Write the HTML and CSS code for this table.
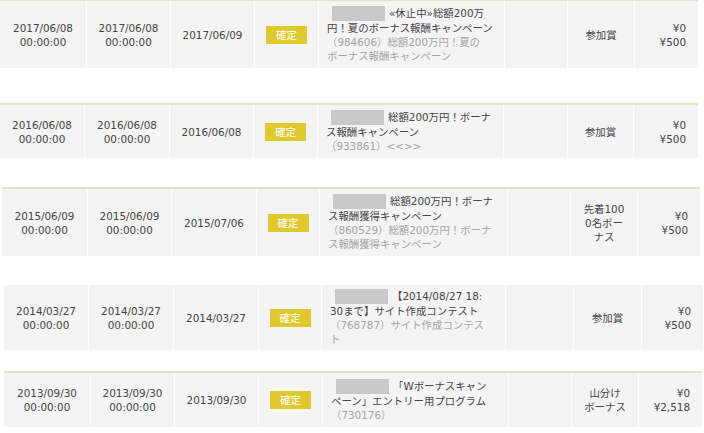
FILE: index.html
```html
<!DOCTYPE html>
<html lang="ja">
<head>
<meta charset="utf-8">
<link rel="stylesheet" href="styles.css">
</head>
<body>
<div class="list">
  <div class="row r1">
    <div class="cell">2017/06/08<br>00:00:00</div>
    <div class="cell">2017/06/08<br>00:00:00</div>
    <div class="cell">2017/06/09</div>
    <div class="cell"><span class="badge">確定</span></div>
    <div class="cell name"><div><span class="mask"></span>«休止中»総額200万<br>円！夏のボーナス報酬キャンペーン<br><span class="sub">（984606）総額200万円！夏の<br>ボーナス報酬キャンペーン</span></div></div>
    <div class="cell"></div>
    <div class="cell">参加賞</div>
    <div class="cell amount">¥0<br>¥500</div>
  </div>

  <div class="row r2">
    <div class="cell">2016/06/08<br>00:00:00</div>
    <div class="cell">2016/06/08<br>00:00:00</div>
    <div class="cell">2016/06/08</div>
    <div class="cell"><span class="badge">確定</span></div>
    <div class="cell name"><div><span class="mask"></span>総額200万円！ボーナ<br>ス報酬キャンペーン<br><span class="sub">（933861）&lt;&lt;&gt;&gt;</span></div></div>
    <div class="cell"></div>
    <div class="cell">参加賞</div>
    <div class="cell amount">¥0<br>¥500</div>
  </div>

  <div class="row r3">
    <div class="cell">2015/06/09<br>00:00:00</div>
    <div class="cell">2015/06/09<br>00:00:00</div>
    <div class="cell">2015/07/06</div>
    <div class="cell"><span class="badge">確定</span></div>
    <div class="cell name"><div><span class="mask"></span>総額200万円！ボーナ<br>ス報酬獲得キャンペーン<br><span class="sub">（860529）総額200万円！ボーナ<br>ス報酬獲得キャンペーン</span></div></div>
    <div class="cell"></div>
    <div class="cell">先着100<br>0名ボー<br>ナス</div>
    <div class="cell amount">¥0<br>¥500</div>
  </div>

  <div class="row r4">
    <div class="cell">2014/03/27<br>00:00:00</div>
    <div class="cell">2014/03/27<br>00:00:00</div>
    <div class="cell">2014/03/27</div>
    <div class="cell"><span class="badge">確定</span></div>
    <div class="cell name"><div><span class="mask"></span>【2014/08/27 18:<br>30まで】サイト作成コンテスト<br><span class="sub">（768787）サイト作成コンテス<br>ト</span></div></div>
    <div class="cell"></div>
    <div class="cell">参加賞</div>
    <div class="cell amount">¥0<br>¥500</div>
  </div>

  <div class="row r5">
    <div class="cell">2013/09/30<br>00:00:00</div>
    <div class="cell">2013/09/30<br>00:00:00</div>
    <div class="cell">2013/09/30</div>
    <div class="cell"><span class="badge">確定</span></div>
    <div class="cell name"><div><span class="mask"></span>「Wボーナスキャン<br>ペーン」エントリー用プログラム<br><span class="sub">（730176）</span></div></div>
    <div class="cell"></div>
    <div class="cell">山分け<br>ボーナス</div>
    <div class="cell amount">¥0<br>¥2,518</div>
  </div>
</div>
</body>
</html>
```

FILE: styles.css
```css
html, body {
  margin: 0;
  padding: 0;
  background: #ffffff;
}

body {
  font-family: "DejaVu Sans", "Noto Sans CJK JP", sans-serif;
  font-size: 10.4px;
  line-height: 14px;
  color: #444444;
  width: 704px;
  height: 433px;
  overflow: hidden;
}

.list {
  display: flex;
  flex-direction: column;
  align-items: flex-start;
}

.row {
  display: grid;
  column-gap: 1px;
  background: #ffffff;
  border-top: 2px solid #e6e3c4;
}

.cell {
  background: #f4f4f4;
  display: flex;
  align-items: center;
  justify-content: center;
  text-align: center;
  white-space: nowrap;
}

.cell.name {
  justify-content: flex-start;
  text-align: left;
  padding: 0 8px;
}

.cell.amount {
  justify-content: flex-end;
  text-align: right;
  padding-right: 12px;
}

.sub {
  color: #a4a4a4;
}

.mask {
  display: inline-block;
  width: 53px;
  height: 15px;
  margin: 0 4px 0 5px;
  background: #c9c9c9;
  vertical-align: -4px;
}

.badge {
  display: inline-block;
  width: 41px;
  height: 18px;
  line-height: 18px;
  background: #e0c92f;
  color: #ffffff;
  font-size: 10.5px;
  text-align: center;
}

.r1 {
  margin-top: -1px;
  margin-left: 0;
  grid-template-columns: 86px 83px 83px 63px 185px 62px 66px 63px;
  grid-auto-rows: 67px;
}

.r2 {
  margin-top: 35px;
  margin-left: 0;
  grid-template-columns: 84px 84px 83px 63px 185px 63px 65px 64px;
  grid-auto-rows: 53px;
}

.r3 {
  margin-top: 29px;
  margin-left: 2px;
  grid-template-columns: 85px 83px 84px 62px 187px 62px 66px 62px;
  grid-auto-rows: 67px;
}

.r4 {
  margin-top: 29px;
  margin-left: 4px;
  border-top: 0;
  grid-template-columns: 84px 84px 84px 62px 183px 67px 67px 61px;
  grid-auto-rows: 65px;
}

.r5 {
  margin-top: 21px;
  margin-left: 4px;
  grid-template-columns: 86px 83px 83px 63px 185px 62px 66px 63px;
  grid-auto-rows: 54px;
}
```
